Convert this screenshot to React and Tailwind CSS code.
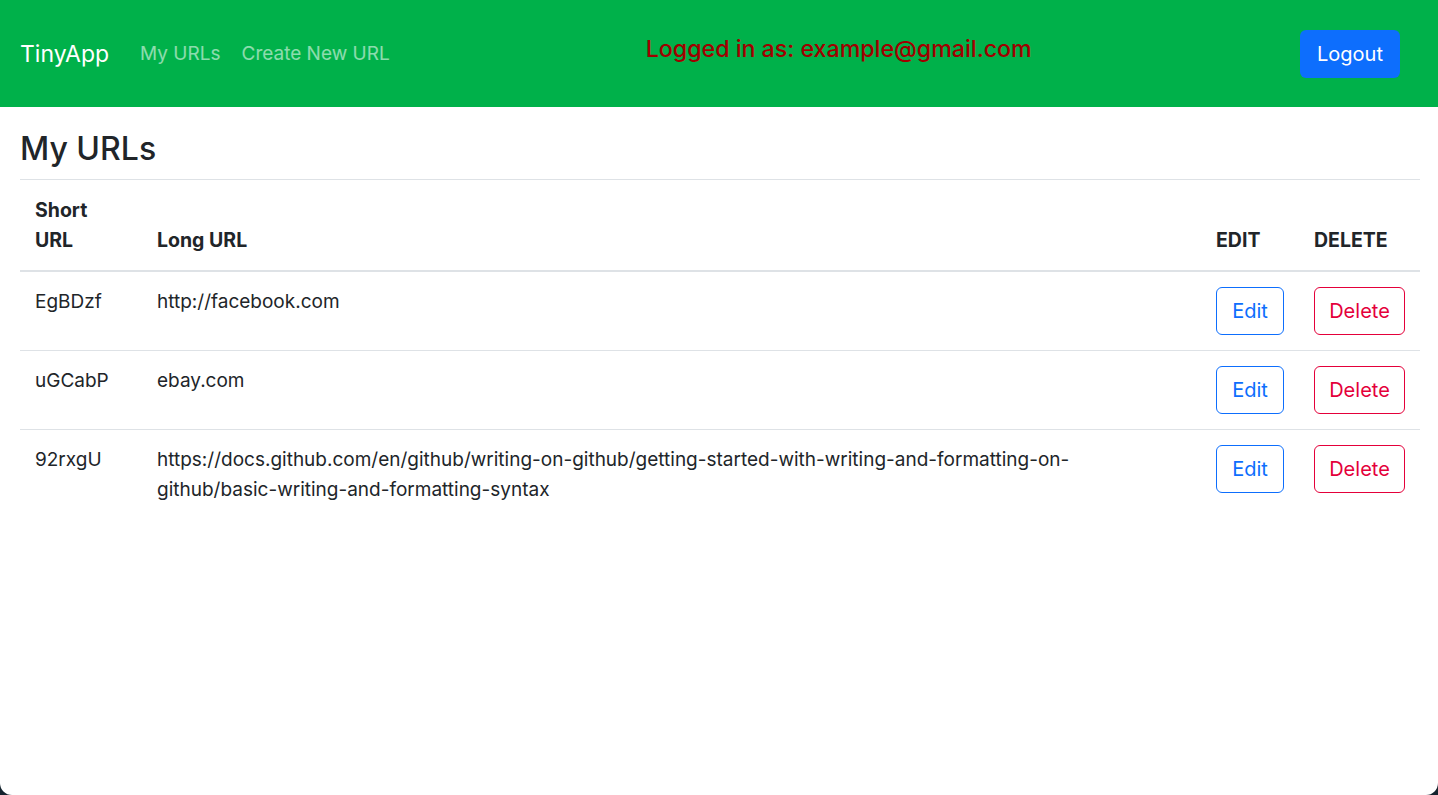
const urls = [
  { id: 'EgBDzf', longURL: 'http://facebook.com' },
  { id: 'uGCabP', longURL: 'ebay.com' },
  {
    id: '92rxgU',
    longURL:
      'https://docs.github.com/en/github/writing-on-github/getting-started-with-writing-and-formatting-on-github/basic-writing-and-formatting-syntax',
  },
];

function Navbar() {
  return (
    <nav className="flex h-[107px] items-center bg-[#00b14a] pl-5 pr-[38px]">
      <a href="#" className="mr-[31px] text-[23px] text-white">
        TinyApp
      </a>
      <div className="flex items-center gap-[21px] text-[19px] text-white/55">
        <a href="#">My URLs</a>
        <a href="#">Create New URL</a>
      </div>
      <h4 className="mb-[10px] ml-[256px] text-[23.2px] font-medium text-[#a00000]">
        Logged in as: example@gmail.com
      </h4>
      <button
        type="button"
        className="ml-auto h-12 w-[100px] rounded-[6px] bg-[#0d6efd] text-[20px] text-white"
      >
        Logout
      </button>
    </nav>
  );
}

function UrlRow({ url, last }) {
  return (
    <tr className={last ? '' : 'border-b border-[#dee2e6]'}>
      <td className="px-[15px] py-[15px] align-top">{url.id}</td>
      <td className="px-[15px] py-[15px] align-top">{url.longURL}</td>
      <td className="px-[15px] py-[15px] align-top">
        <button
          type="button"
          className="h-12 w-[68px] rounded-[6px] border border-[#0d6efd] text-[20px] text-[#0d6efd]"
        >
          Edit
        </button>
      </td>
      <td className="px-[15px] py-[15px] align-top">
        <button
          type="button"
          className="h-12 w-[91px] rounded-[6px] border border-[#e4003a] text-[20px] text-[#e4003a]"
        >
          Delete
        </button>
      </td>
    </tr>
  );
}

export default function App() {
  return (
    <div className="h-[795px] bg-[#15232e] font-['Inter',sans-serif] text-[19px] leading-[30px] text-[#212529]">
      <div className="h-full overflow-hidden rounded-b-[12px] bg-white">
        <Navbar />
        <main className="pl-5 pr-[18px]">
          <h2 className="pt-[23px] pb-[11px] text-[32px] font-medium leading-[38px]">My URLs</h2>
          <table className="w-full table-fixed border-t border-[#dee2e6] text-left">
            <colgroup>
              <col className="w-[122px]" />
              <col />
              <col className="w-[98px]" />
              <col className="w-[121px]" />
            </colgroup>
            <thead>
              <tr className="border-b-2 border-[#dee2e6] text-[19.5px]">
                <th className="px-[15px] py-[15px] align-bottom font-bold">
                  Short
                  <br />
                  URL
                </th>
                <th className="px-[15px] py-[15px] align-bottom font-bold">Long URL</th>
                <th className="px-[15px] py-[15px] align-bottom font-bold">EDIT</th>
                <th className="px-[15px] py-[15px] align-bottom font-bold">DELETE</th>
              </tr>
            </thead>
            <tbody>
              {urls.map((u, i) => (
                <UrlRow key={u.id} url={u} last={i === urls.length - 1} />
              ))}
            </tbody>
          </table>
        </main>
      </div>
    </div>
  );
}
